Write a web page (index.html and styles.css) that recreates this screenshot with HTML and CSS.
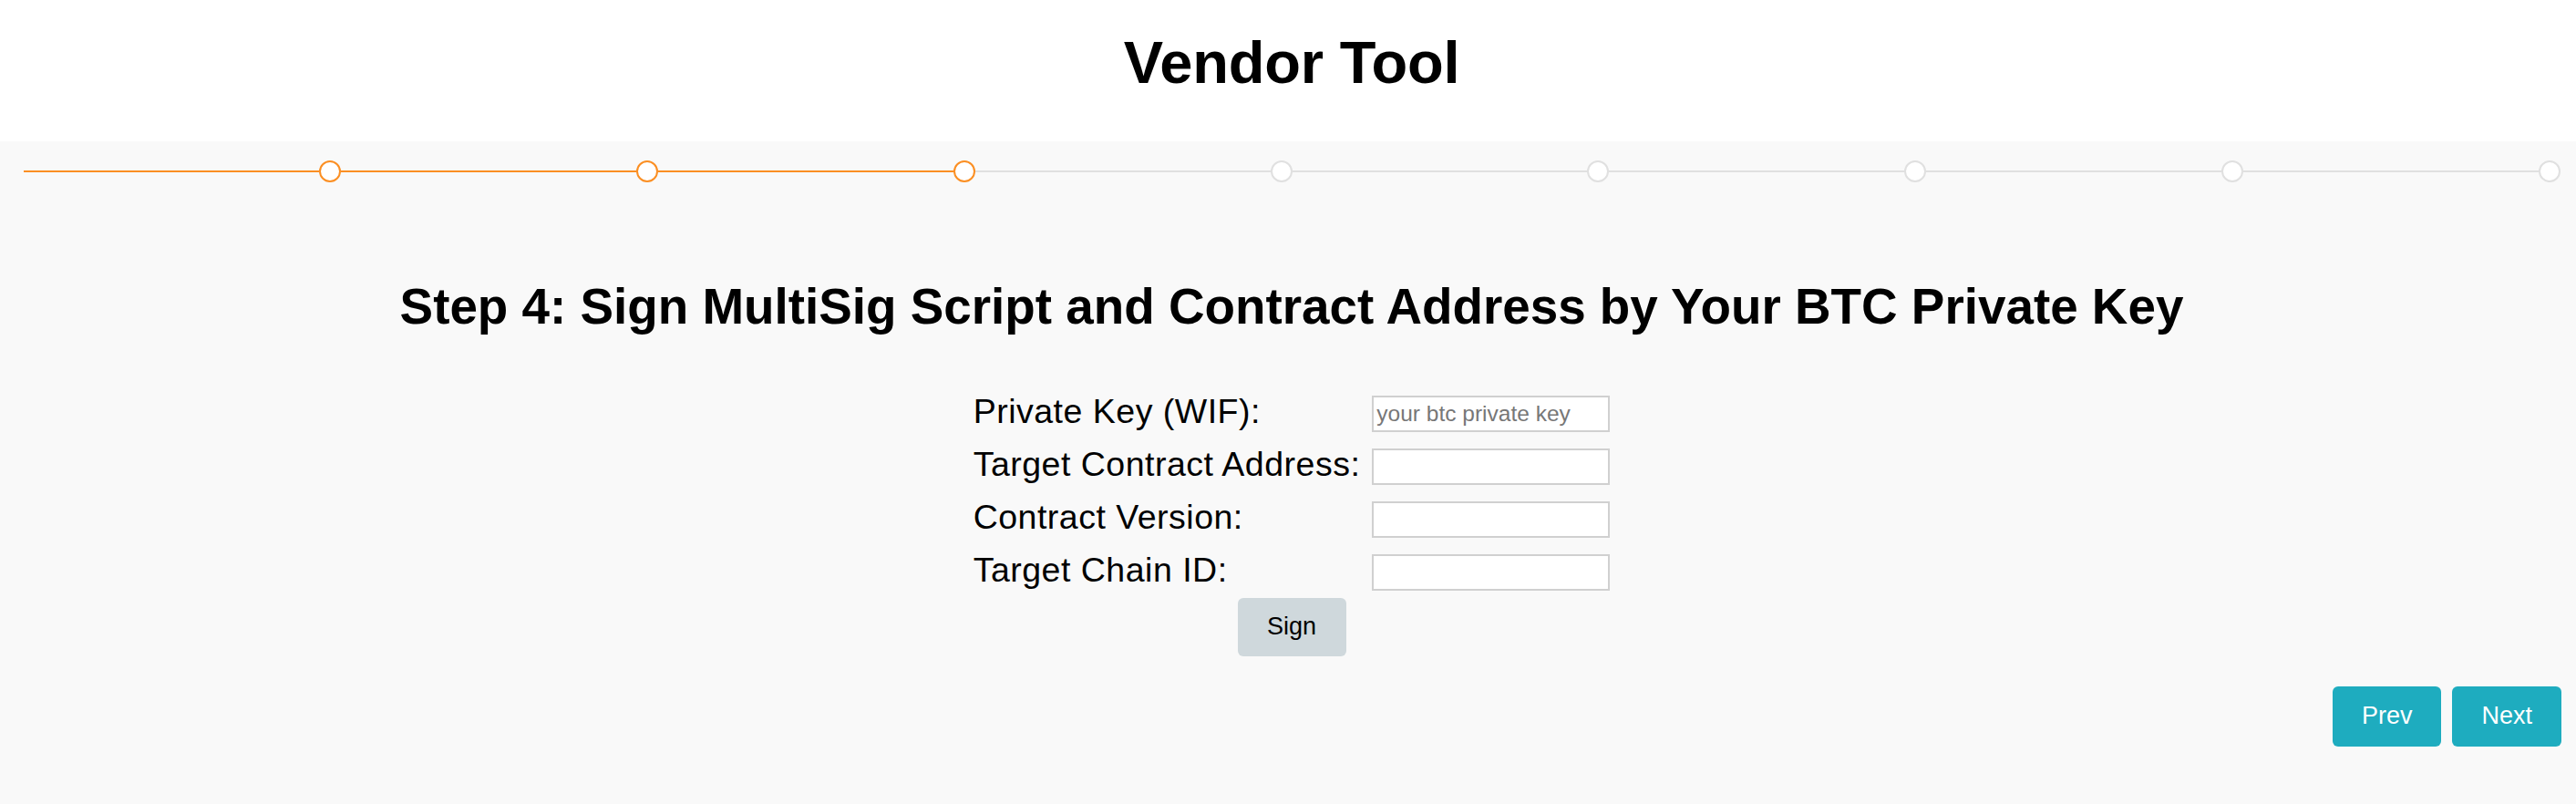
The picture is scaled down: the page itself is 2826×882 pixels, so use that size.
FILE: index.html
```html
<!DOCTYPE html>
<html lang="en">
<head>
<meta charset="utf-8">
<title>Vendor Tool</title>
<link rel="stylesheet" href="styles.css">
</head>
<body>
<header class="top">
  <h1 class="title">Vendor Tool</h1>
</header>
<main class="main">
  <div class="stepper">
    <div class="step done"><span class="line"></span><span class="dot"></span></div>
    <div class="step done"><span class="line"></span><span class="dot"></span></div>
    <div class="step done"><span class="line"></span><span class="dot"></span></div>
    <div class="step"><span class="line"></span><span class="dot"></span></div>
    <div class="step"><span class="line"></span><span class="dot"></span></div>
    <div class="step"><span class="line"></span><span class="dot"></span></div>
    <div class="step"><span class="line"></span><span class="dot"></span></div>
    <div class="step"><span class="line"></span><span class="dot"></span></div>
  </div>
  <h2 class="heading">Step 4: Sign MultiSig Script and Contract Address by Your BTC Private Key</h2>
  <form class="form">
    <label class="label" for="wif">Private Key (WIF):</label>
    <input class="field" id="wif" type="text" placeholder="your btc private key">
    <label class="label" for="addr">Target Contract Address:</label>
    <input class="field" id="addr" type="text">
    <label class="label" for="ver">Contract Version:</label>
    <input class="field" id="ver" type="text">
    <label class="label" for="chain">Target Chain ID:</label>
    <input class="field" id="chain" type="text">
  </form>
  <div class="sign-row"><button class="sign" type="button">Sign</button></div>
  <div class="nav-row">
    <button class="nav" type="button">Prev</button>
    <button class="nav" type="button">Next</button>
  </div>
</main>
</body>
</html>
```
FILE: styles.css
```css
html, body {
  margin: 0;
  padding: 0;
}
body {
  font-family: "Liberation Sans", Arial, sans-serif;
  color: #000;
  background: #f9f9f9;
  width: 2826px;
  height: 882px;
  overflow: hidden;
}
.top {
  background: #fff;
  height: 155px;
  box-sizing: border-box;
  padding-top: 36px;
}
.title {
  margin: 0;
  text-align: center;
  font-size: 65px;
  line-height: 65px;
  font-weight: 700;
  letter-spacing: -0.2px;
  padding-left: 8px;
}
.main {
  background: #f9f9f9;
  height: 727px;
}
.stepper {
  display: flex;
  padding: 21px 17px 0 26px;
}
.step {
  flex: 1;
  display: flex;
  align-items: center;
}
.line {
  flex: 1;
  height: 2px;
  background: #e0e0e0;
}
.dot {
  width: 24px;
  height: 24px;
  box-sizing: border-box;
  border: 2px solid #e0e0e0;
  border-radius: 50%;
  background: #fff;
}
.step.done .line {
  background: #fb8f23;
}
.step.done .dot {
  border-color: #fb8f23;
}
.heading {
  margin: 109px 0 0;
  text-align: center;
  font-size: 54.8px;
  line-height: 54.8px;
  font-weight: 700;
  padding-left: 8px;
}
.form {
  margin: 70px 0 0;
  display: grid;
  grid-template-columns: auto 261px;
  column-gap: 13px;
  row-gap: 18px;
  justify-content: center;
  align-items: center;
  padding-left: 8px;
}
.label {
  font-size: 37.5px;
  line-height: 34px;
  letter-spacing: 0.5px;
  padding-bottom: 6px;
}
.field {
  box-sizing: border-box;
  width: 261px;
  height: 40px;
  margin: 0;
  border: 2px solid #d0d0d0;
  background: #fff;
  font-family: "Liberation Sans", Arial, sans-serif;
  font-size: 24.5px;
  padding: 0 3px;
  color: #000;
}
.field::placeholder {
  color: #777;
}
.sign-row {
  display: flex;
  justify-content: center;
  margin-top: 8px;
  padding-left: 8px;
}
.sign {
  width: 119px;
  height: 64px;
  border: none;
  border-radius: 6px;
  background: #cfd8dc;
  color: #000;
  font-family: "Liberation Sans", Arial, sans-serif;
  font-size: 27px;
  padding: 0;
}
.nav-row {
  display: flex;
  justify-content: flex-end;
  gap: 12px;
  padding-right: 16px;
  margin-top: 33px;
}
.nav {
  height: 66px;
  min-width: 118px;
  padding: 0 32px;
  border: none;
  border-radius: 6px;
  background: #1eacbf;
  color: #fff;
  font-family: "Liberation Sans", Arial, sans-serif;
  font-size: 27px;
}
```
